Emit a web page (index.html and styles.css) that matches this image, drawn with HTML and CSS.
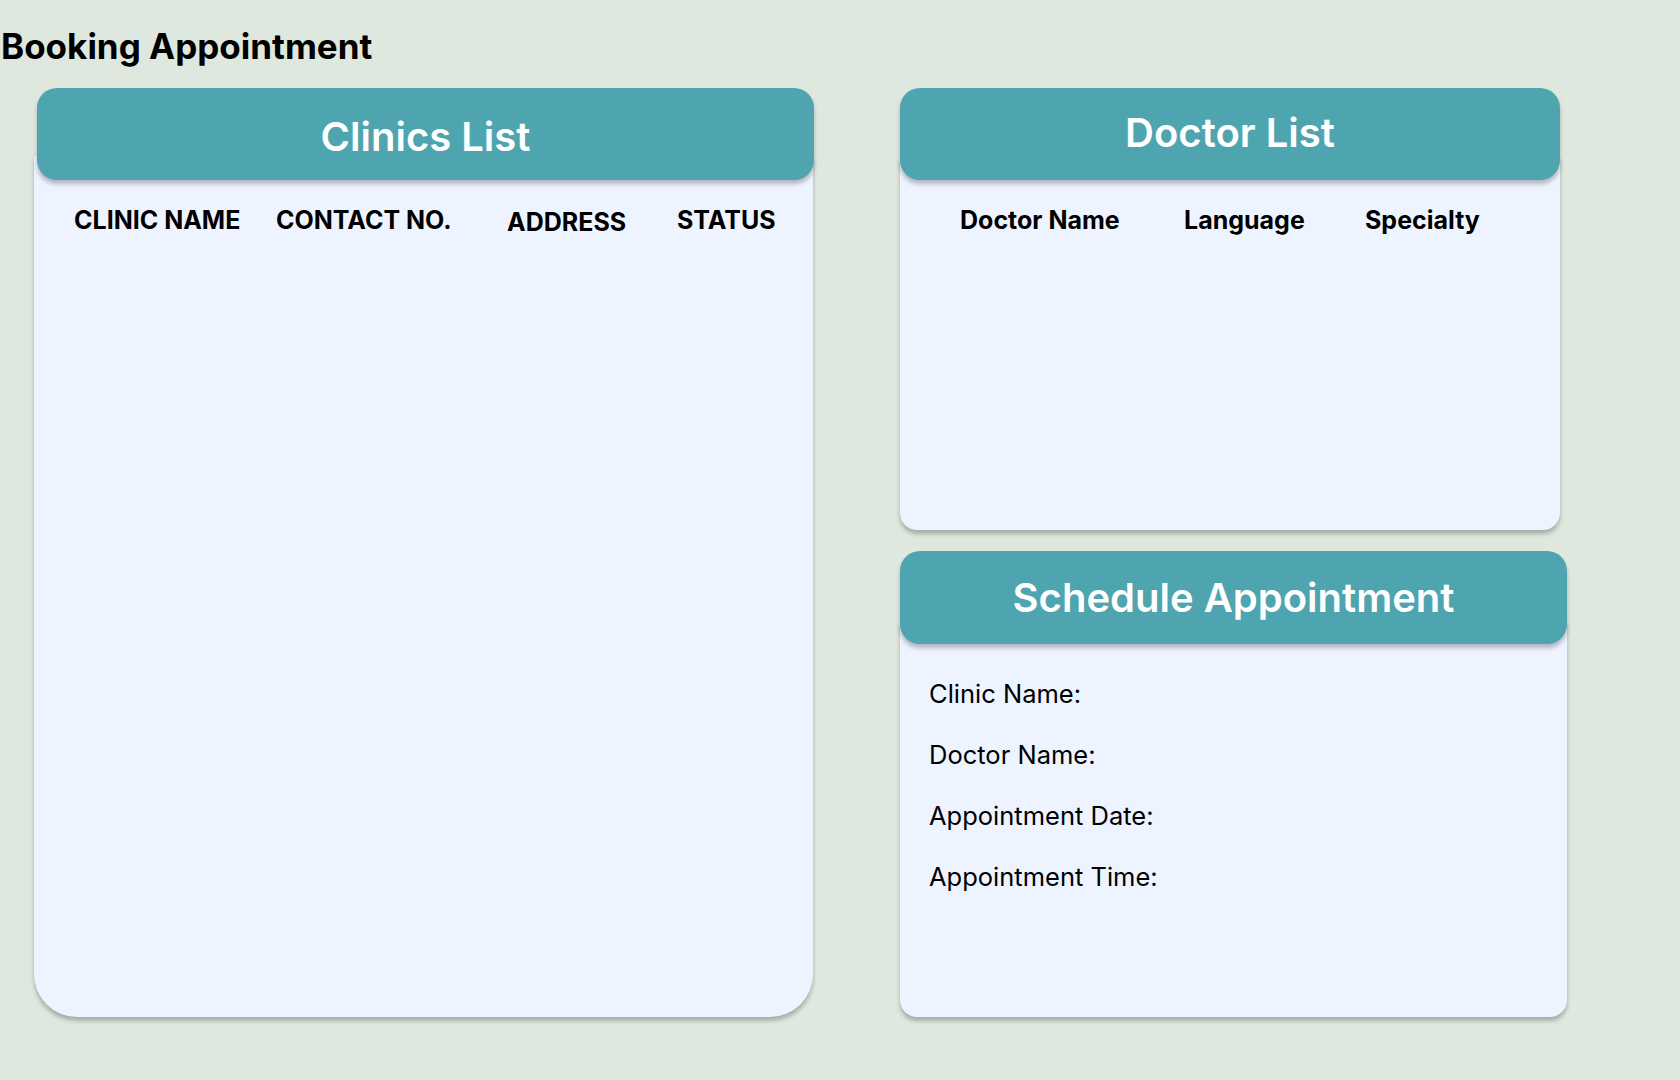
FILE: index.html
```html
<!DOCTYPE html>
<html lang="en">
<head>
<meta charset="utf-8">
<title>Booking Appointment</title>
<link rel="stylesheet" href="styles.css">
</head>
<body>
<h1 class="page-title">Booking Appointment</h1>
<main class="layout">
  <section class="card card-clinics">
    <header class="card-head head-clinics"><h2 class="card-title">Clinics List</h2></header>
    <div class="card-body body-clinics">
      <div class="cols cols-clinics">
        <span class="col-label">CLINIC NAME</span>
        <span class="col-label">CONTACT NO.</span>
        <span class="col-label col-address">ADDRESS</span>
        <span class="col-label">STATUS</span>
      </div>
    </div>
  </section>
  <div class="right-col">
    <section class="card card-doctors">
      <header class="card-head head-doctors"><h2 class="card-title">Doctor List</h2></header>
      <div class="card-body body-doctors">
        <div class="cols cols-doctors">
          <span class="col-label">Doctor Name</span>
          <span class="col-label">Language</span>
          <span class="col-label">Specialty</span>
        </div>
      </div>
    </section>
    <section class="card card-schedule">
      <header class="card-head head-schedule"><h2 class="card-title">Schedule Appointment</h2></header>
      <div class="card-body body-schedule">
        <p class="field">Clinic Name:</p>
        <p class="field">Doctor Name:</p>
        <p class="field">Appointment Date:</p>
        <p class="field">Appointment Time:</p>
      </div>
    </section>
  </div>
</main>
</body>
</html>
```
FILE: styles.css
```css
* { box-sizing: border-box; }
html, body {
  margin: 0;
  padding: 0;
  background: #dfe8df;
  font-family: Inter, "Noto Sans", sans-serif;
  color: #000;
}
body { width: 1680px; height: 1080px; overflow: hidden; }

.page-title {
  margin: 0;
  padding: 25px 0 0 1px;
  font-size: 35px;
  font-weight: 700;
  line-height: 42px;
  height: 88px;
}

.layout {
  display: flex;
  align-items: flex-start;
  gap: 87px;
  padding-left: 34px;
}

.card {
  display: flex;
  flex-direction: column;
}

.card-head {
  position: relative;
  z-index: 1;
  background: #4fa5af;
  border-radius: 20px;
  box-shadow: 0 4px 4px rgba(0, 0, 0, 0.25);
  text-align: center;
  color: #fff;
}
.card-title {
  margin: 0;
  font-size: 40px;
  font-weight: 600;
  line-height: 48px;
}

.card-body {
  background: #edf3ff;
  margin-top: -24px;
  padding-top: 24px;
  box-shadow: 0 4px 4px rgba(0, 0, 0, 0.25);
  flex: 1;
}

/* Clinics */
.card-clinics { width: 779px; height: 929px; }
.head-clinics { margin: 0 -1px 0 3px; height: 92px; padding-top: 25px; }
.body-clinics { border-radius: 0 0 43px 43px; }

.cols {
  display: grid;
  align-items: start;
}
.col-label {
  font-size: 25px;
  font-weight: 700;
  line-height: 30px;
  white-space: nowrap;
}
.cols-clinics {
  padding: 25px 0 0 40px;
  grid-template-columns: 202px 231px 170px auto;
}
.col-address { padding-top: 2px; }

/* Right column */
.right-col {
  display: flex;
  flex-direction: column;
  gap: 21px;
}

.card-doctors { width: 660px; height: 442px; }
.head-doctors { height: 92px; padding-top: 21px; }
.body-doctors { border-radius: 0 0 17px 17px; }
.cols-doctors {
  padding: 25px 0 0 60px;
  grid-template-columns: 224px 181px auto;
}

.card-schedule { width: 667px; height: 466px; }
.head-schedule { height: 93px; padding-top: 23px; }
.body-schedule {
  border-radius: 0 0 17px 17px;
  padding: 58px 0 0 29px;
  display: flex;
  flex-direction: column;
  gap: 30px;
}
.field {
  margin: 0;
  font-size: 25.5px;
  font-weight: 400;
  line-height: 31px;
}
```
